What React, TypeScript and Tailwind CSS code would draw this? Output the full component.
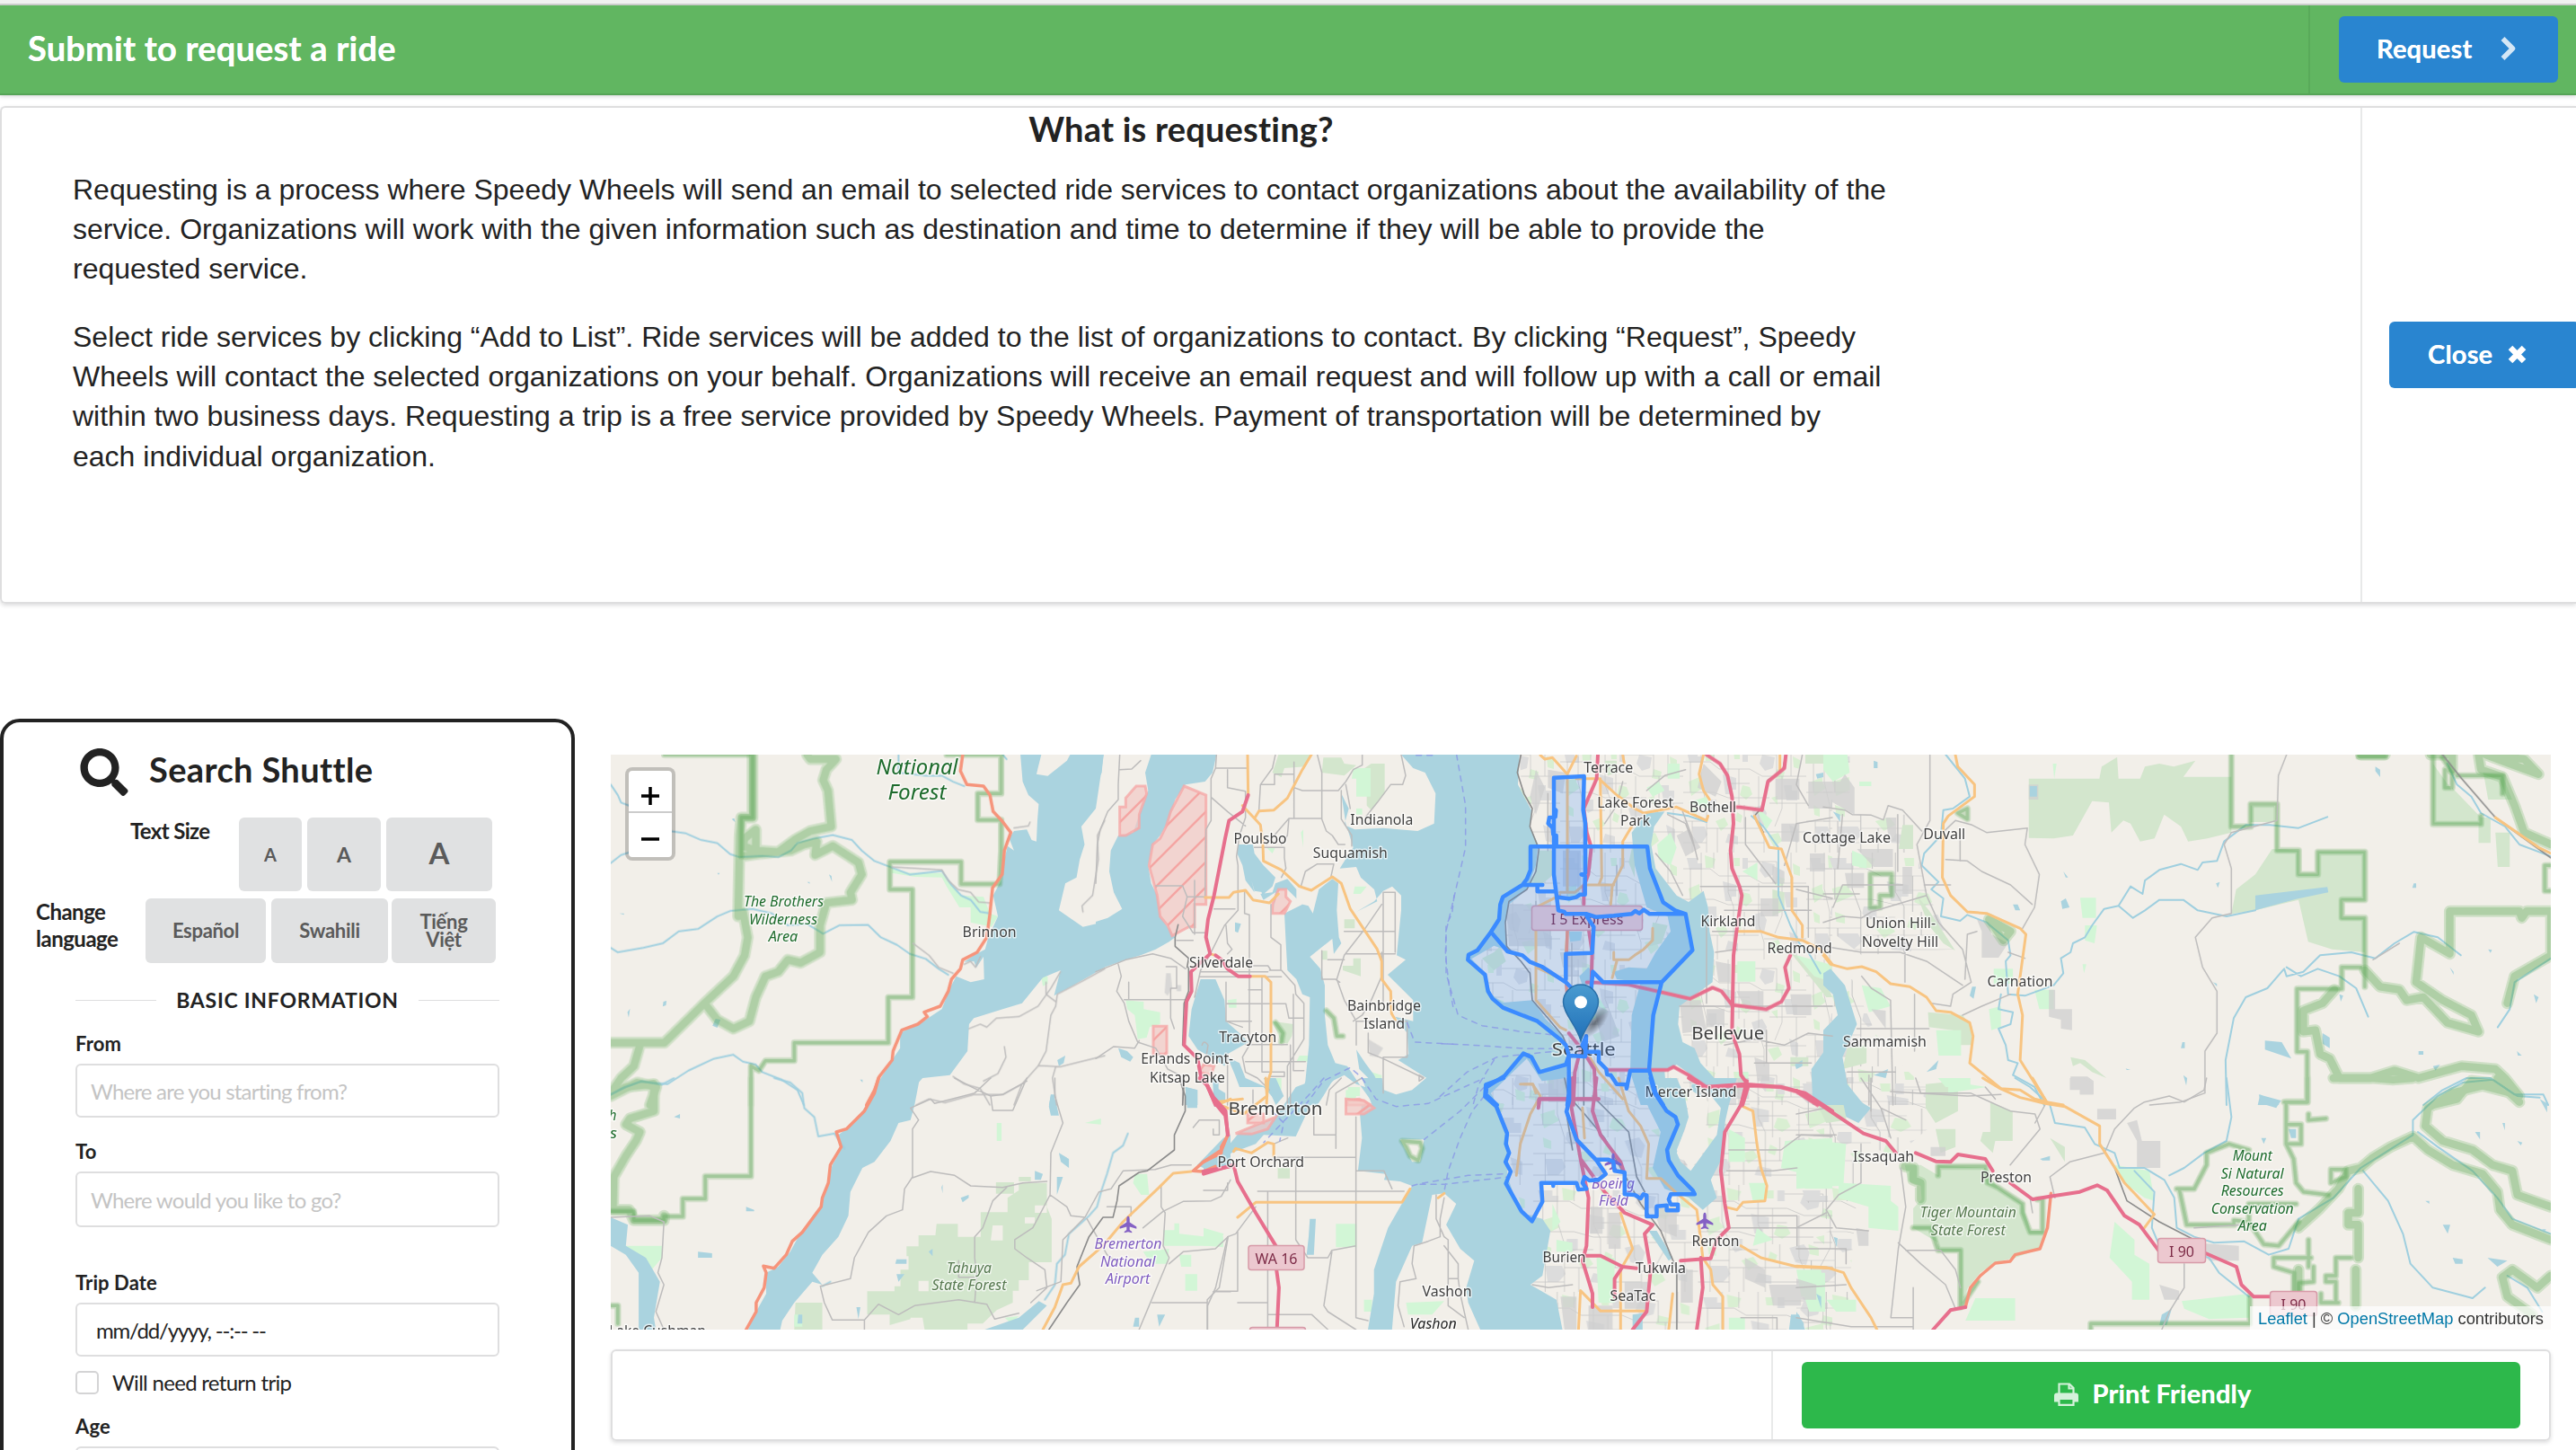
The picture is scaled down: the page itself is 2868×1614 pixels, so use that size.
import React from "react";
import { FaSearch } from "react-icons/fa";

type Kind =
  | "urban" | "water" | "land" | "forest" | "meadow" | "builtup" | "river" | "military"
  | "minor" | "rail" | "primary" | "trunk" | "motorway" | "border" | "ridge" | "ferry"
  | "zoneFill" | "zone";

type Sheet = { transform: string; layers: Partial<Record<Kind, string>> };

// Each map sheet carries its own local grid, placed on the shared canvas by its transform.
const sheets: Sheet[] = [
  {
    transform: "translate(670 830) scale(0.35714 0.33333)",
    layers: {
      water:
        "M1305,30L1312,120 1330,165 1362,195 1358,250 1355,320 1340,315 1325,280 1285,285 1270,310 1285,350 1265,335 1255,380 1245,450 1220,500 1235,570 1220,605 1205,640 1195,680 1160,700 1130,722 1160,720 1168,740 1190,705 1192,780 1150,790 1105,770 1085,810 1060,880 1010,915 930,960 930,1010 905,1050 870,1110 830,1200H965L975,1140 1000,1110 1085,1100 1140,1020 1145,930 1160,910 1250,880 1310,860 1375,775 1430,750 1410,835 1470,800 1568,740V588L1500,605 1425,550 1445,460 1480,440 1490,380 1505,330 1495,270 1540,210 1565,30Z M345,935L355,912 370,915 360,942Z M192,855l10,-3 -2,15 -10,4Z M80,890l8,-12 -4,30Z M1420,1050L1445,1035 1440,1060 1425,1070Z M1400,1165h14l-8,35h-12Z M405,245l8,-3 3,14Z M708,430l8,5 2,20Z M360,425h8l-4,6Z M640,455h8v6Z M55,560h14v5Z M805,1115h8v10Z",
      land: "M1370,30L1355,95 1390,101 1450,50 1460,30Z",
      meadow:
        "M905,410L960,425 1060,425 1085,455 1120,500 1190,505 1210,560 1235,570 1215,605 1150,590V540H1115L1075,470 1060,440 975,438 905,425Z M1370,770h20v25l-15,8Z",
      river:
        "M28,130L50,165 60,190 85,200 M28,392L60,365 90,355 150,320 210,285 260,292 310,315 360,325 400,362 430,372 500,368 550,372 590,350 610,325 660,310 720,298 780,315 810,350 850,385 900,405 960,430 1060,418 1090,465 1120,500 1150,515 1180,555 1210,560 M28,675L50,690 130,675 190,660 240,620 300,612 360,570 400,552 470,545 530,560 580,600 640,595 690,628 740,600 830,598 870,640 920,665 960,695 1010,712 1050,745 1080,765 M28,1165L70,1140 120,1122 205,1130 270,1085 350,1045 410,1032 440,1055 480,1065 500,1090 560,1115 610,1150 630,1200 M925,30L925,90 1010,100 1060,100 1095,120 1130,135 M1250,30L1262,45",
      minor:
        "M905,405L1060,415 1080,450 1110,480 1150,490 1175,522 1210,525 M970,660L1020,700 1050,740 1095,760 M1285,275L1330,268 1335,255 M1130,730L1150,720 1165,740 1180,705 M1568,250L1545,300 1548,380 1530,500 1497,535 1500,555 M1145,945L1180,930 1200,940 1230,910 1300,905 1360,870 1400,810 1430,755 M1568,745L1500,785 1420,830 1415,870 1400,900 1385,1020 1360,1070 1310,1130 1250,1165 1160,1165 1070,1192 1020,1180 980,1200 M1360,1068L1430,1072 1568,1035 M1415,1072L1405,1110 1418,1200 M1255,1005L1260,1040 1235,1095 1190,1120 M1095,1105L1130,1130 1180,1145 1210,1200 M1385,790L1385,830 1415,855 M1310,1130L1285,1200",
      border:
        "M195,30H470V240H435V370 M1075,30H1245V160H1172V248H1245V350L1240,462H1120V388H898V480H968V840H893V992H600V1052H510L490,1085 465,1070V1200",
      ridge:
        "M470,30V240H435L430,300 425,570 M640,30L650,45 730,45 700,80 690,115 705,150 715,270 650,285 600,315 550,355 480,350 440,335 445,310 480,280 480,350 M430,370L500,360 590,350 630,330 670,320 665,365 720,335 800,390 810,430 775,490 780,515 700,525 680,600 680,690 620,725 580,715 550,755 510,770 480,840 460,920 410,945 360,915 320,860 M425,570L440,555 455,640 445,700 410,770 320,860 195,992H28 M120,995L100,1070 60,1110 28,1160 M28,1170L110,1125 170,1140 150,1200",
      trunk:
        "M1125,30L1118,85 1138,130 1190,135 1210,165 1220,220 1245,248 1275,290 1255,350 1248,430 1218,475 1210,560 1200,640 1170,690 1125,715 1118,745 1090,780 1080,820 1055,870 1005,890 1015,905 985,930 935,950 908,1020 905,1050 865,1105 850,1150 825,1200",
    },
  },
  {
    transform: "translate(1220 830) scale(0.33333)",
    layers: {
      water:
        "M0,30H25L20,90 0,130Z M185,30H403L390,90 365,120 300,130 265,180 245,250 215,300 190,330 175,400 185,460 205,500 215,570 250,620 265,640 245,655 200,680 150,700 100,715 0,750V588L40,575 88,545 60,490 45,420 50,350 75,300 125,290 145,230 175,150 165,90Z M475,330L525,330 530,360 560,400 600,440 590,470 555,500 550,450 560,490 530,485 520,450 530,490 500,450 490,400 472,360Z M600,460L640,445 670,480 670,525 710,535 725,560 745,480 790,445 810,460 805,550 812,640 820,660 795,695 790,645 715,705 750,745 765,800 765,900 775,1000 800,1060 840,1070 870,1015 880,1080 910,1110 900,1140 870,1130 830,1100 790,1120 760,1170 740,1200H680L700,1120 712,1000 715,840 690,830 670,780 640,750 635,660 630,560 590,560 600,490 560,515 550,495 590,490Z M1050,30L1020,30 1060,75 1100,90 1135,160 1130,260 1075,285 960,275 865,280 830,265 845,210 820,160 835,260 860,340 840,370 815,410 870,405 885,440 930,480 940,520 870,555 930,520 960,485 990,470 1020,500 1020,550 1005,700 1035,715 975,765 1060,850 1060,920 1000,905 1040,960 1045,1030 1010,1050 1105,1110 1040,1160 960,1165 930,1100 900,1060 870,1015 840,1070 880,1130 930,1200H1200V30Z M350,780H400L430,850 435,920 480,960 510,990 440,1030 430,1070 400,1050 340,1015 310,970 320,880Z M440,1040L480,1060 500,1110 590,1150 610,1195 560,1140 480,1140 465,1100Z M75,1010l30,10 20,20 -10,15 -30,-15Z M300,1140l40,10v50h-40Z M465,590l20,5 -10,30 -10,-5Z M390,1110l20,5v90h-15Z",
      land: "M590,560L630,560 690,530 640,480 610,480Z",
      forest:
        "M610,30H720L700,70 630,75 620,105 590,90Z M760,40H820L830,60 870,65 830,100 755,90Z M920,60H965V160L920,215 905,200V150H890V80Z M830,580h35v30h-35Z M755,685h18v30h-18Z M860,710h25v60l-60,-20v-15h35Z M590,920L660,930 655,970 640,995 620,990Z",
      meadow:
        "M860,75H918V170H870V110H855Z M870,210h20v20h-20Z M865,470h40l-20,25h-25Z M100,850L160,855 160,880 215,890 215,930 180,940 170,975 140,980 130,900 105,880Z M680,1035h30v20h-40Z M920,1090l35,10v50Z M570,340h30l-10,20Z M685,290l8,-10v60Z M440,850l30,-5v30h-25Z M835,1150h40l-10,40h-30Z M590,1110h30v40h-25Z",
      builtup: "M235,760h15l5,50 -15,25 -10,-10Z M910,980L960,1010 940,1040 915,1035Z M270,800h15v20h-15Z",
      military:
        "M135,135H165L170,160 145,230 145,275 100,300H80V205H100V175Z M295,135L368,165V530H330V605H310L255,635 240,600 215,570 205,500 178,400 190,330 215,310 235,270 250,220Z M610,480H635V505L650,520 630,560H590V530Z M192,937H237V1030H192Z M360,1065l35,5 -10,30 -40,-10Z M840,1185l40,-5 40,20H840Z",
      minor:
        "M403,30L400,75 385,110 385,250 368,280 365,500 M400,75H505 M440,80V140L500,152 M385,172L440,220 500,268 M600,30L590,75 550,130 545,215 M550,130H597V95H662 M662,55V240 M662,140L690,150H810L835,120 860,80 890,65V30 M740,30L755,90V245L770,285 790,300 810,330H832 M820,150V245L855,300V335 M645,243H755 M645,243L640,300 620,330 M645,243L570,330 M530,340H630V375L635,410 620,440 M795,395H740L700,420 685,470 M795,395L785,440 M80,30L75,130 75,180 40,220 15,280 5,330 0,460 M80,80L120,78 150,50 M1020,30L1035,100 1025,130H985L940,190 900,240 M835,130L850,210 M500,152V240L480,300 470,370 475,400V550L430,600 380,700 350,750 330,840 M395,545H465 M497,485V560L513,565V900 M435,600L440,660 455,680 440,695 M585,530L585,640 618,665V750 M580,750H620L665,800 668,830 695,860V980 L640,1070V1200 M960,490V690 M960,490H1000V690 M955,530L900,610 830,700 805,780 830,850 870,920 870,1000 M830,620H1000 M835,695H1000 M755,685V780H800L815,790 M775,715H830 M955,690V770L920,850 890,900 860,920 M870,920H1040V1040H960V1160 M910,960V1025L960,1045 1095,1110 1080,1120 1080,1100 1095,1108 M960,640V860 M200,468H290L305,505H365 M305,505L290,570 325,625H365 M330,450V630 M0,755L100,715 190,695 250,710 300,745 M75,730L85,770 70,820 95,860 110,920 140,990 200,1010 240,1080 280,1100 M95,848H300 M110,790V845 M235,738H270V810H250V910L262,945 M0,1045L60,1005 130,1010 145,985 M270,650H325 M350,755H575 M345,772H620 M435,790V920L490,940 M435,862H635L645,910H695 M435,920H520 M513,900V1000L490,1040 500,1090 540,1110 580,1150 M555,770V1090 M510,815H555 M500,998H640 M500,1055H700 M555,1090H630V1105H580 M660,830V1085H695 M355,1000Q360,980 375,1000L370,1030 M525,735H575L585,750 M650,1000V1200 M440,1030V1200 M525,1150V1200 M290,1100V1200 M820,1110L780,1150 770,1200",
      rail: "M275,598L265,640V670L310,710 305,740 M310,740V820L295,860 290,1000 M295,1120L290,1200",
      primary:
        "M507,30L509,165 M720,30L690,80 640,175 595,215 545,218 530,243 M490,200L530,243 550,265 558,330 560,385 620,415 680,470 720,483 790,438 820,460 850,545 940,680 955,720 955,780 985,820 988,895 1000,915 M365,507H445L460,490 500,483 525,515 580,525 610,495 M380,695L400,700 M510,770H565L585,790V1090L575,1120 570,1200 M400,1190L490,1180",
      motorway:
        "M509,165L490,220 445,250 432,310 395,500 375,580 368,640 382,695 M400,700L420,715 440,745 475,770H515 M382,695L350,725 318,755 320,820 303,855 295,1000 340,1045 350,1100 370,1130 400,1200",
      border: "M770,885L795,910 805,970H825 M600,925L625,960 620,990",
      ferry:
        "M1070,32H1130 M1197,500L1190,560 1170,600 1168,700 1180,800 1195,880 M1040,925L1065,990 1200,997 M700,1200L760,1120 850,1075 890,1110",
    },
  },
  {
    transform: "translate(1600 830) scale(0.33333)",
    layers: {
      urban: "M275,30H1320V1200H130V700L225,560 300,430Z",
      water:
        "M0,30H275L270,130 290,170 315,215 310,270 338,330 330,400 300,480 240,530 225,600 238,685 190,668 115,712 160,760 180,830 220,858 320,850 360,910 420,970 440,1040 430,1110 350,1120 300,1045 180,1160 200,1200H0Z M650,290L700,225 760,220 725,270 715,330 730,410 800,500 840,522 890,485 905,540 910,620 925,690 920,790 850,840 810,870 805,930 820,990 860,1010 880,1060 935,1120 900,1135 850,1100 800,1065 760,1090 770,1200H680L645,1090 650,900 680,790 600,780 590,755 640,740 700,745 730,690 780,620 770,570 700,540 660,400Z M440,620h45l-5,30 -35,5Z M475,770l30,-30 15,15 0,40 -35,5Z M1310,930H1320V1200H1255L1250,1080 1300,1010Z M1265,95l25,-5v15l-20,5Z M1195,1065l25,-15v20l-20,10Z M850,1130h20l20,70h-40Z",
      forest:
        "M250,120l40,30 20,80 -25,-10Z M340,350h50v80l-50,40 -20,-20Z M560,50h40v40l-30,10Z M190,690l20,-20 20,50 -40,30 -40,-40Z M660,300l-20,90 20,50Z M720,590l50,10 -20,60 -40,10Z M1230,30h90v30h-90Z M1120,480l40,10v60l-40,20Z M1180,690l60,30 60,70 20,50h-20Z M1180,1040h60v30h-60Z",
      meadow:
        "M735,330L780,290 800,340 780,400 740,380Z M1003,720h60v68h-60Z M840,190l60,-20 10,40Z M480,860l60,-20 30,50 -60,30Z M1000,1090h40v50h-30Z M700,140l40,-20 20,30 -40,20Z M770,60h40v50h-40Z M1200,700l110,30 10,60 -60,-20Z M1060,200l60,50 -20,30Z M1020,420l50,-30v60Z",
      builtup:
        "M370,80l60,10 -10,70 -50,-20Z M330,80l30,60 -30,90 -20,-60Z M890,60l60,60 -20,50 -60,-30Z M1130,110h80v70h-80Z M1240,120h80v90h-80Z M1245,360h50v60h-50Z M1150,260h60v60h-60Z M800,300l40,-20 40,60 -50,30Z M1080,510h60v60h-60Z M810,850h70l20,100 -80,10Z M900,880h60v60h-60Z M1000,820h90v60h-60Z M1120,400l40,20v40h-40Z M930,720l50,10v60h-40Z M230,530h150v140h-140Z M520,860l60,30 30,80 -60,20Z M1180,830h70v70h-60Z M1060,1040l50,20v60h-40Z M410,690h90v50h-80Z M420,350h60v120h-60Z M830,770l30,0 10,60 -30,-20Z M870,760l20,10v50l-20,-20Z",
      river: "M770,225L840,235 900,255 M1050,235L1090,270 1140,340 1140,500 1180,600 1210,660 1240,690 1280,760",
      minor:
        "M700,150L760,100 830,80 M620,120L600,200 560,260 M1320,240L1200,260 1160,400 M960,1000L1060,980 1160,1000 1240,960 1320,970 M820,220L850,300 870,380 M1220,30L1200,130 1240,200 M730,360L780,420 820,500 M880,470H1240V640 M920,620H1060 M810,870H1320 M960,550H1250 M1060,1060H1250 M900,600V860 M1030,240V330L1130,460 M1200,480L1320,510 M1100,950V1060 M770,230L830,260 860,340 M930,690L1000,680 M330,520V850 M450,660V800 M600,400V500 M370,160V350",
      rail:
        "M280,30L268,90 290,160 318,210 310,270 340,345 330,420 300,480 240,520 228,590 232,670 280,720 310,760 318,850 370,910 420,970 450,1040 M1165,30L1155,80 1105,115 1090,200 1060,235 1090,290 M490,1040V1200",
      primary:
        "M345,32L360,45 385,40 435,95 465,35 M435,95V490 M465,110H540L600,165 660,210 690,225 800,205 900,250 905,235 M545,110L550,440 540,465 M620,30L625,60 M650,270L620,320 620,400 585,470 580,530 M410,490H460L490,465H590 M890,30L875,95 890,150 910,180 M1060,235L1110,340 1150,345 1185,440V550L1220,600V640 M1000,620H1080L1140,640 1220,650 1280,680 1320,730 M720,610L720,650 690,680 660,700 640,715H590V690 M600,720L585,775 M410,500L330,540V850L410,940 430,950 M330,740L430,785 M510,1040L540,1090 620,1180 M435,620L430,690 M290,1130H320L330,1160 M1145,30V80",
      trunk: "M435,620L430,780 440,900",
      motorway:
        "M537,30L533,110 490,210 500,290 515,340 505,430 490,470V530 M500,570L518,690 515,800 M500,790H520L640,798 845,845 920,808 950,820 985,865 1100,880 1150,855 1175,810 1162,740 1180,700 M900,30L945,60 970,100 985,170 990,260 980,350 985,410 1010,470 1018,500 1000,620 990,700 985,960 1010,1030 1015,1100 1040,1135 1020,1200 M985,205H1010L1085,215 1105,120 1160,75 1165,30 M565,1083H770L790,1072 840,1100 900,1140 1040,1135 1150,1140 1200,1155 1270,1200 M440,960L480,1010 460,1090 455,1200 M500,1040L525,1080 530,1180 M340,1195V1180H540",
      ferry:
        "M65,30L95,200 95,340 65,470 30,620 30,760 70,900 150,935 280,955 380,965 M15,995L120,1000 300,1012H400 M380,1022L200,1040 100,1090 0,1180 M190,1050L140,1130 120,1200",
      zoneFill:
        "M312,337H702L711,410 755,523 795,550 830,562 853,683 750,790 722,900 708,1082 715,1110H438L440,1035 430,1000 410,980 335,917 220,872 185,840 170,815 160,765 103,720 105,698 135,683 180,622 207,580 211,530 220,505 285,465 300,445 312,415Z M438,1110H218L225,1103 288,1028 315,1040 342,1090 430,1065 440,1035Z M390,107L491,102 488,215 495,260V337H392L398,298 386,275 371,260 375,240 395,237Z",
      zone:
        "M390,337V210L397,216 395,238 375,240 371,260 386,275 388,297 398,300V337 M390,210V107L491,102 488,215 495,260V425L482,430 494,435V497H478L465,506 440,511 405,506 M285,465H352 M335,465V487H395 M312,337H702L711,410 755,523 795,550 830,562 853,683 750,790H555L520,755 515,810 M750,790L722,900 708,1082 730,1160 755,1200 M312,337V415L300,445 285,465 220,505 211,530 207,580 180,622 135,683 105,698 103,715 160,765 170,820 185,845 220,875 335,920 410,980 430,1000 440,1035 430,1065 342,1090 315,1040 288,1028 225,1103 165,1140 163,1165 200,1200 M180,622L235,687 285,700 310,722 350,738 430,790 450,810 M390,337V430L405,550 425,555 430,562H500L530,572 590,568 650,562 662,552 675,560 690,548 710,562H830 M500,570L523,605 518,692 430,695V780 M440,1035L495,1038 498,970 485,1000 500,1022H540V1055L565,1080 568,1098 580,1100 600,1130 632,1132 633,1145 645,1085H708 M440,1035V1160L435,1200",
    },
  },
  {
    transform: "translate(1600 830) scale(0.33333)",
    layers: { zoneFill: "M390,337H495V497H478L440,511 405,506 390,430Z" },
  },
  {
    transform: "translate(2030 830) scale(0.53444 0.33333)",
    layers: {
      urban: "M0,30H55V230H170L215,480 270,680 80,700 0,600Z M0,780H60L120,1000 250,1200H0Z",
      water:
        "M0,760L15,745 45,800 70,930 40,1040 50,1130 85,1200H0V950L30,900 20,830 0,800Z M900,500L1050,472 1052,490 985,512 900,550Z M920,985L955,990 975,1045 920,1015Z M910,1165L950,1200H905Z M1040,960l15,15v35l-15,-15Z M1150,70l10,10v25l-10,-20Z M430,135h15v35h-15Z M495,520l10,-10 8,30 -15,5Z M500,420l10,20h-5Z M818,460l8,-5 -4,20Z M310,805l8,0 -5,40 -8,-10Z M105,50l8,5v20h-8Z M20,220l15,10v25Z M748,990h5v20h-8Z M750,1100l8,10 -2,25Z M812,790l8,5v10Z M1270,1070l15,-5 -10,20Z M1480,830l10,10 -5,20Z M1230,460h5v15h-8Z M1385,680l8,2 -3,10Z M395,530l10,0 5,20 -10,0Z M105,1100l30,-20 -5,30Z M215,1090l25,-40 -5,30Z M1305,740l8,15v10Z M1445,1020l10,15h-8Z M1075,830l8,5 -5,20Z M1240,1020h10v12h-10Z M630,1078l10,5h-8Z M780,705l5,25Z",
      forest:
        "M428,110H575L580,70 612,38 615,110H660L670,70 700,60 730,70 775,50 750,104H850V290L800,310 760,320 745,270 710,230 690,310 660,320 640,260 625,250 600,290 595,190 560,185 520,300 480,310 428,308Z M935,345L990,350V430H1030V355H1128V515H1080V575H1128V690L1060,680 1010,655 990,515 900,550 850,562 860,480 900,430Z M1270,60L1310,150V140L1370,240V262H1270Z M165,265h22v80h-30Z M890,200h50v55h-50Z M195,500L220,550 275,685 250,660 220,600Z M218,890L290,900 310,940V1000L280,1000 270,950 220,940Z M515,1040L545,1050 590,1110 560,1090 535,1060 520,1070Z M1365,240h25v85h-25Z M1400,290h30v115h-25Z M1375,90l40,10 20,80 -50,0Z M50,1010l40,-10v60l-50,20Z",
      meadow:
        "M0,30H50L55,90 20,120 0,80Z M535,508H568V575H540Z M545,600h25l-5,60 -20,-10Z M235,950H287V1035H240Z M440,815H480V880H450Z M355,745h40v50h-40Z M345,880l25,-10v70l-20,10Z M478,60h8l-5,50Z M60,350l30,20v40l-30,-10Z M75,120h25v15h-25Z M540,730l8,0 -5,30Z M80,800l40,10 20,60 -45,20Z M260,1120l80,20 -80,20Z",
      builtup:
        "M0,120H35L45,95 65,140V230L20,190 0,190Z M45,425l40,0v50h-35Z M70,345h75v60h-40Z M165,405h20v90h-20Z M470,815H483V880H518V950L495,945V915L470,905Z M515,1105H550L563,1120V1165H535V1140H515Z M320,580L345,590 350,630 385,660 365,708H330V620Z M130,240h22v80h-15Z M428,130h20v50h-20Z M100,880l30,5v60Z",
      river:
        "M255,30L295,110 305,170 270,210 250,215 245,300 210,360 205,400 240,455 225,480 250,510 245,570 285,585 300,565 340,590 385,650 390,700 380,720 385,830 420,835 480,800 500,760 495,710 515,690 520,660 545,640 560,600 585,545 615,535 640,470 665,495 670,450 700,415 745,395 780,415 790,390 820,385 835,320 880,265 930,265 990,275 1050,238 M615,535L645,575 670,550 700,515 750,515 780,550 840,570 900,550 M370,830L365,880 395,890 390,930 365,945 380,1000 385,1050 405,1060 395,1100 440,1140 460,1200 M840,1200L838,1050 855,910 880,840 925,810 960,745 965,770 1000,755 1035,700 1100,690 1150,710 1190,660 1230,622 1280,640 1328,700 M965,740L995,770 1030,745 1075,770 1110,810 1135,905 M1405,940L1430,880 1440,790 1516,710 M1300,60L1320,130 1350,170 1370,225 1420,270 1450,330 1516,370 M1250,1200L1290,1150 1340,1110 1390,1110 1440,1165 1500,1165 1510,1200",
      minor:
        "M0,205L45,215 60,230 100,232 125,248 135,200 165,215 205,285 M222,30V250L195,330 215,500 240,590 290,680 308,790 270,830 265,870 225,860 M252,285L275,250 310,265 340,290 370,285 425,275 420,330 450,430 440,540 415,610 M255,380L300,385 330,420 390,465 435,530 M285,290V385 M965,30L948,100 945,250 850,290 835,330 850,410 850,560 810,575 775,640 790,740 820,820 820,960 795,1020 795,1160 745,1190 680,1200 M0,670L80,690 160,690 215,720 290,800 M210,465H265 M165,465H40L20,540 M0,590L40,570 80,575 100,555 215,500 M170,690V790 M155,230V420 M80,770L100,810 140,850 145,1200 M70,945H220 M95,1100V1200 M190,830V1020 M50,1090H150 M290,900L330,870 390,830 M320,620L300,630 295,780 M140,1155L300,1170 370,1165 M385,690L420,710 M0,495H75 M30,410L40,230 M1145,715L1200,660",
      rail: "M1290,30L1330,110 1400,240 1516,375",
      primary:
        "M275,30L280,70 315,130 315,170 260,235 250,260 248,440 265,500 300,555 340,560 410,610 422,630 405,830 415,900 410,1050 465,1190 500,1200 M0,700L15,730 50,745 80,738 110,755 140,795 180,805 215,840 235,885 265,890 305,925 312,970 305,1060 370,1145 410,1150 440,1180 470,1192 M1400,240L1490,340 1516,360",
      border:
        "M850,30V270H890V195H945V350H990V430H1030V355H1128V515H1080V575H1128V805 M1120,740H1080V812H987V1022H1008V1190H960 M1115,36H1170 M1270,30V262H1370V235 M1290,40L1310,90V140H1295V80 M1320,100H1415V160 M1516,400H1503V485H1516 M98,428H142V500H118V540H98V430 M300,210V245L280,225Z",
      ridge:
        "M1128,750L1160,805 1200,815 1215,850 1250,840 1300,925 1365,955 1350,900 1290,850 1235,790 1245,640 1305,695V553H1450L1455,575 1465,553H1516V700L1440,770 1425,860 M1065,815L1040,860 1000,885V955L1025,950 1035,1030 1055,1045 1075,1110 1140,1110 1190,1085 1240,1110 1330,1070 1400,1080 1420,1110 1450,1170 M1270,1200L1320,1180 1350,1120 1410,1130 1450,1190 M1365,30L1370,80 1415,105 1440,200 1460,290 1516,330 M1380,30L1430,60 1490,95 1460,45 1400,35 M1265,30H1310V80 M1120,30H1170 M345,580L390,620 375,650Z",
    },
  },
  {
    transform: "translate(670 1200) scale(0.44643 0.33333)",
    layers: {
      water:
        "M705,0H793L780,90 770,140 740,150 720,210 680,280 650,300 620,380 615,460 590,530 550,590 525,650 550,690 525,680 480,750 450,810 445,840H365L385,780 410,720 410,650 440,630 470,580 490,530 545,440 560,360 575,290 600,230 590,190 630,150 690,30Z M22,465L65,490 60,560 110,600 145,680 130,800 135,840H92V650L60,590 22,560Z M955,840L1040,800 1090,745 1110,760 1050,840Z M1120,55l12,20 8,50 -20,0 -5,-30Z M1455,30l30,10v60h-25Z M1140,250l25,20v30l-20,-20Z M1080,310l20,10 -5,20h-15Z M1135,330l15,0 -15,60Z M1485,290L1550,200 1568,190V300L1500,300Z M180,130l15,-10v15Z M240,580l35,5v15h-35Z M360,430l20,10v5h-20Z M735,605l25,0v15h-28Z M815,580l10,-10v25Z M735,655l20,0 -15,25Z M895,400l20,-10v10l-15,15Z M1385,790l20,0 -15,40Z M1330,800l10,0v30h-15Z M635,765l10,0 -5,40Z M850,355v30l-3,-20Z M490,790l10,0v30h-12Z M1530,30l25,20v30l-20,-5Z",
      forest:
        "M835,487H888V530H945V448H1012V400L1040,375V350H1110V430L1122,470V615H1065V675H1040V710H1025V750L985,775 950,820H912V840H805L800,800H770V805L718,825V790H662V712H730V695H745V640H765V595H760V562H790V525H832Z M983,348h45v38h-45Z M1040,330h30v15h-30Z M483,750H550V840H480Z",
      land: "M975,492h25v50h-30Z M1055,465h25v20h-25Z M790,677h25v35h-25Z M1080,425h30v25h-30Z",
      meadow:
        "M58,560H150V600L125,640 110,610 70,580Z M1400,508H1428V485H1440V520L1510,530V505L1550,530 1550,565 1510,560H1400Z M1350,580L1415,570 1410,620 1370,620Z M1330,320L1360,320 1365,390H1345L1325,350Z M1455,655h30v55h-30Z M985,150l12,0v60h-12Z M1005,800l35,-5 -20,25Z M1205,150l40,-15v20Z M480,790l20,0v40h-20Z M1440,590h30v40h-25Z",
      river:
        "M22,55L60,30 100,10 150,22 180,0 M430,0L470,15 500,50 505,100 530,130 540,195 580,185 605,235 M1312,185L1300,225 1275,250 1260,320 1245,380 1235,430 1215,460 1165,520 1155,590 1135,620 1130,690 1105,740 M550,695L570,680",
      minor:
        "M880,0L930,35 970,60 1000,55 1060,10 M970,0L930,50 830,85 820,70 770,100 790,140 775,170V330L755,370 750,440 710,460 665,515 630,600 620,670 545,695 555,750 575,808H655L690,755 740,790 780,760 890,740 960,755 980,805 1040,785 M775,333L820,312 880,325 920,360 1000,365 1050,350 1110,345 M970,60L975,108H1025L1060,0 M1130,0V60L1150,150 1120,250 1118,390 1160,430 1170,460 1205,465 1240,380 1270,370 1300,310 1380,305 M1010,365L975,410 950,500 930,530V600L935,660 930,750 M890,610V665H935 M1118,390L1075,500 1030,540 1030,570 1060,600 1105,640 1110,700 1070,750 M22,465L120,460 155,480 150,600 140,650 155,690 135,780 155,840 M655,808V840 M1205,465L1150,540 1145,680 1085,710 M1395,360V430L1405,450 1400,560 1415,600 1340,840 M1350,500L1400,445 1450,412 1520,410 1545,395 1568,340 M1372,750H1508 M1562,530L1540,700 1510,740V840 M1415,620L1450,580 1530,570 1562,530 M1260,430h60v30 M1475,165L1490,140H1540V190L1525,190 1525,170 M1525,713H1568 M1380,305L1420,290H1470 M1210,470L1260,590 1290,620",
      rail: "M1440,0L1455,60V110L1428,190 1428,240 1360,310 1340,315 1290,360 1285,410 1275,465H1250L1215,530 1185,630 1192,690 1160,750 1115,840",
      primary: "M1470,312L1425,318 1390,365 1300,480 1250,560 1190,630 1170,685 1150,690 1130,765 1100,840 M1535,90L1568,70",
      trunk: "M690,0L680,50 655,110 610,170 585,180 597,230 570,290 565,350 550,400 547,430 500,515 475,545 460,590 430,635 403,628 410,650 405,700 385,750 385,780 360,840 M1562,190L1545,230 1545,250 1500,280 1475,310 1500,312 1530,295",
      motorway: "M1490,0L1510,25 1530,85 1555,125 1562,190 M1568,295L1500,312",
      border: "M372,0V328H258V403H202V462H155V475H80V445H22 M22,760H40V820",
      ridge: "M22,55L60,30 130,20 130,110 70,135 60,155 95,180 85,210 60,260 30,330 28,440H68L80,475H155V460",
    },
  },
  {
    transform: "translate(1340 1200) scale(0.44643 0.33333)",
    layers: {
      urban: "M730,0H1568V840H890L880,740 815,690 860,520 800,470 730,100Z",
      water:
        "M395,0H750L700,60 735,95 760,185 758,330 790,450 845,470 865,510 845,660 815,690 880,740 895,840H690L660,750 655,700 675,610 640,570 605,490 630,420 600,385 570,390 545,550 520,560 480,680 470,840H410L425,720 425,640 460,500 520,360 490,345 450,340 455,320 385,310 395,200 390,120 395,90 420,90Z M50,245L90,180 180,130 230,30 290,0H330L270,80 230,195 150,190 130,220 70,250 0,315V280Z M1080,0H1180L1200,60 1210,130 1180,250 1190,280 1215,310 1280,190 1290,100 1230,0H1330L1310,90 1300,150V250L1265,340 1280,400 1245,440 1210,400 1150,370 1120,300 1140,180 1110,100Z M1520,0H1568V70L1525,50Z M265,470h15l-5,120h-18l5,-60Z M1110,510l20,0 40,90 -10,10Z M1465,790h20l15,50h-40Z M1070,790l25,-5 0,55h-25Z M150,0h30l20,60 -20,30Z",
      land: "M445,0H555L520,40 480,55 450,40Z M490,205h60l-10,75 -20,0Z M1205,30L1260,80 1245,250 1215,305 1180,240 1210,140Z",
      forest: "M485,205L550,210 545,250 545,285 520,275 500,235Z M1140,110l25,20v60h-25Z M185,300h30v35h-30Z",
      meadow:
        "M330,487H382V565H330Z M0,500l50,20 -10,40 -40,0Z M505,750L600,745 570,790 510,790Z M1450,210L1568,200V370L1500,370 1495,320 1440,300Z M870,420l20,60 -20,30Z M1360,350h40v60h-30Z M1480,650h70v130h-40Z M1380,500l40,40 -50,20Z M360,30h30v30h-30Z M980,600h45v150l-40,0Z M400,740h20v40h-20Z M1310,170l40,30v80h-40Z M1310,800l40,0v40h-40Z M880,540l40,10v30h-40Z",
      builtup:
        "M965,430h30v90h-30Z M1050,680h60v90h-60Z M1190,640h30v110h-30Z M1410,690h80v70h-70Z M890,730h40v110h-30Z M1350,600l50,40v60l-50,-30Z M1010,450h30v120h-30Z M1310,0h50v70h-40Z M1120,430h60v100l-40,-20Z M960,760h60v80h-60Z M860,0h50v80h-50Z",
      military: "M355,70L400,75 425,100 400,120H355Z M80,185L180,130 160,170 120,187Z M110,120h40v30h-40Z",
      minor:
        "M395,0L330,50V235 M275,100V190 M275,190H330 M175,265H380V570 M0,375H60V350 M135,378H500 M230,265V540 L260,600H310 M130,430L80,520 60,530 30,700 10,760V840 M30,712H85V510 M85,750H160 M160,380V835 M160,790H270L310,840 M310,600L320,575 380,560 M380,560V800L410,810 M320,580L300,760 310,780 380,840 M380,130V310H450L470,370 M600,400L590,470 590,530 560,545 525,560 520,620 530,670 490,680 485,760 500,830 M580,390V470L600,530 610,540V760 M600,560L635,620V670H610 M635,670L640,720 660,840 M610,760L650,800 M1305,310H1420L1480,300 M1310,500H1568 M1310,240H1440L1490,190 1568,195 M1330,460H1480V560 M820,690L860,700 920,690 M1340,800H1430V840 M175,265V220L210,200",
      rail: "M900,0L910,60 950,120 1000,200 1040,300 1090,420 1140,510 1180,640 1180,840 M970,60L1060,180 1080,330 1100,380 M905,120L920,240",
      primary:
        "M75,245L80,235 120,250 160,215 175,220V260 M85,465L130,415H495L515,370 M585,400L600,385 M155,0L158,60 100,120 40,90 M780,325L790,220 815,120 840,60 820,20 790,20 M1035,0L1060,110 1090,160 1110,220 1105,335H1140L1180,385 1230,440 1240,540 1245,600 1265,640 1270,690 1295,730V840 M1345,95L1370,110 1380,220 1390,300 1405,360 1400,410 1345,415 1330,440 1300,430 M1340,560L1390,600 1480,630 1568,635 M1040,450L1070,570 1040,640V840 M940,710L990,778H1100 M940,710L935,840 M1170,720L1160,840 M945,100L950,200",
      trunk: "M60,190L45,240 0,280",
      motorway:
        "M0,0L25,65 55,110 60,190 M0,320L75,290 85,345 130,450 180,560 M182,642L188,700 183,840 M920,0L915,80 940,270 960,400 955,560 945,610 970,720V765 M980,0L970,110 990,190 1040,280 1050,320 M835,100L838,70H905 M930,70H985 M940,270L1000,380 1050,450 1120,490 1100,520 1115,640 1105,780 1070,840 M950,593H990L1045,630 1080,635 M1045,630L1025,670V730 M1190,610L1265,602 1280,540 M1355,10L1340,90 1300,180 1290,310 1300,420 1310,500 1280,540 M1240,600L1245,700 1230,840 M1210,0L1250,30 1350,20 1440,30 1500,50 1568,110",
      border: "M495,210L540,215 545,235 535,275 515,260 505,230Z",
      ferry:
        "M300,0L260,60 210,130 150,215 M170,110L200,150 190,210 M395,0L430,70 480,95 560,85 650,30 700,0 M700,30L640,110 550,205 M700,60L670,110 640,200 610,310 600,380 M520,360L540,352 660,325 750,320 M540,355H600L760,330",
      zoneFill:
        "M748,0H912V75L905,112 930,205 980,272 1003,315 975,342 950,330 955,370 935,372 930,350H842L845,413 819,478 793,445 754,352 766,312 753,280 762,250 754,220 757,185 730,95 702,62 704,22Z M912,0H1115L1125,50 1155,110 1177,130 1183,155 1156,240 1160,275 1183,325 1225,388H1160L1165,425H1130V462H1105V390L1050,388V315L1025,310 1020,280 980,272 930,205 905,112 912,75Z",
      zone:
        "M748,0L704,22 702,62 730,95 757,185 754,220 762,250 753,280 766,312 754,352 793,445 819,478 845,413 842,350H872V360 350H930L935,372 955,370 945,350 950,330 962,342 985,340 1003,320 980,275 930,205 905,112 912,75V0 M980,272H1010L1022,280 1025,310 1050,315V388L1075,390 1090,402 1097,388 1105,392V462H1130V428L1155,425V442H1183V422H1165L1160,405 1165,388H1225L1220,375 1183,325 1160,275 1156,240 1183,155 1177,130 1155,110 1125,50 1115,0",
    },
  },
  {
    transform: "translate(2000 1200) scale(0.55357 0.33333)",
    layers: {
      urban: "M0,0H300V120L200,260 130,220 100,840H0V560L80,500 0,380Z",
      water:
        "M35,0H90L110,60 150,100 125,150 100,130 95,90 35,50Z M930,55L975,75 965,100 935,85Z M1390,600L1430,610 1410,630Z M735,790l20,-20 -10,55h-15Z M990,170l15,0v30h-10Z M1320,600l20,5v15h-15Z M1365,180l10,0v25Z M1495,70l15,15v30Z M1300,490l15,0 -5,30Z M0,780l15,40v20H0Z M75,530l8,5 -2,30Z M490,270l20,-10v15h-15Z M1420,150l5,0v25Z M1450,210l10,5 -3,10Z M40,720l10,10v40Z M935,200l10,0 -5,20Z M1265,410h8v10Z M1500,505l8,0 -5,10Z",
      forest:
        "M218,290H250L285,325V292L380,300 405,365 455,420 470,510H498L490,570 440,600 400,615 370,650 345,700 330,765V580H285V550L235,500V435L252,405 250,360 225,345Z M260,20L325,10V110L280,150 260,100Z M390,80L435,110V210H400L395,250 370,210 375,180H390Z M280,170h40v60l-30,20Z M510,200l30,30v50Z M40,80l60,0v60l-40,10Z",
      meadow:
        "M0,230L50,210 100,220 95,350 190,360V410L205,430V510L145,500V430L85,400V360L0,370Z M640,480L680,540V590L710,620V740H675V680L630,600Z M775,745L910,720V800L830,805 780,770Z M360,735H440V810H340Z M640,290L710,310 720,410 700,400 660,350Z M285,0H350V30L300,30Z M0,640h50v90H10Z M60,740h60v40h-40Z",
      builtup:
        "M550,0H575L597,15V55H570V40H550Z M605,103h38v35h-38Z M665,150l20,-10 10,70H732V300H685V210Z M800,550l90,10v50l-60,0Z M730,690l40,20 0,30h-30Z M0,670l40,20v50H0Z M120,500l25,10v50h-20Z M270,230h30v30h-30Z",
      river:
        "M440,0L470,30 510,90 520,150 580,165 600,220 640,250 650,300 700,300 740,340 760,400 765,500 800,530 840,550 900,545 950,590 990,570 1010,470 1080,400 1135,300 1240,190 M865,0L875,130 865,210 820,250 780,300 750,325 M680,310L720,380 715,500 730,560 830,600 850,650 880,690 910,730 M1240,190V140L1290,60 1340,15 1400,5 1450,60 1495,65 M1140,310L1190,410 1220,520 1235,620 1280,700 1360,735 1385,700 M1250,180L1290,230 1360,310 1410,400 1440,470 1517,520 M1430,660L1470,700 1500,780",
      minor:
        "M0,120L60,100 130,180 M0,190H80 M130,0L170,100 190,200 M170,100L220,140 M240,0L250,50 350,50 430,110 480,120 490,170 430,290 M500,90L480,150 M380,30L400,70 M130,220V350L85,390 60,440 M0,500L60,450 M210,300L220,430 205,570 M205,550L250,620 300,690 320,770 M205,570L190,800H235 M0,570H100V620 M60,440L80,500 145,510 M220,575H290L320,640 330,700 M520,400L510,330 550,280 620,250 M620,250L640,170 680,100 700,80 750,60 780,80 820,40 825,0 M780,620V700L750,780 735,840 M470,400L475,450 M0,700L100,690 M235,700V840 M800,500L900,490 M0,800L110,830H235 M150,0V110",
      rail: "M610,220L640,300 665,410 730,480 800,540",
      primary:
        "M375,0L410,35 450,65 500,85 540,95 610,160 610,220 660,350 720,455 700,500 M475,0L505,85 M0,628L60,632 95,650 110,700 150,800 162,840",
      trunk: "M512,385L505,500 490,570 440,590 430,612 400,618 370,660 350,700 340,765",
      motorway:
        "M0,42L50,90 135,185 180,210 200,250 M240,250L280,278 310,280 325,255 380,270 395,310 M430,350L475,405 510,395 570,380 605,358 625,375 660,460 690,490 728,575 M823,585L885,630 895,690 920,730H952 M275,840L310,775 340,765",
      border:
        "M285,325V295H380L385,350 M235,500H270L285,575H330V765L365,680 M385,350L405,365 455,420V450L470,515H495V405H485 M765,370H800L825,290V250L870,220 910,240 M770,370L785,490H880V475L910,480 940,555 970,560 1010,480 M1028,0V80H985V220L1000,270 1005,350 1020,380 1070,390 M1065,135L1030,140V120 M985,155H1015V220H985 M910,480V420H1005 M1030,540V630 M592,840V820H912V730 M1075,310V350L1105,330V305H1075 M1035,600H960V630L1000,650V710 M1040,630V680L1010,685V710 M1115,600H1085V660H1065V680H1085V745 M1055,720V750H1090",
      ridge:
        "M218,295L235,300V340L250,350V405 M1080,0H1160L1200,5 1240,0 M1410,0L1450,55 1380,25 1320,50 1270,100 1265,160 1300,210 1360,240 1400,290 1440,310 1450,390 1517,430 M1135,300L1160,265 1195,230 1240,195 1270,240 1320,290 1380,320 1410,380 1415,440 1440,490 1517,540 M1010,500L1050,440 1090,370 1110,310 1135,300 M1130,370V450H1110V490H1130V600 M1125,640V760 M1517,660L1490,700 1440,640 1420,665 1430,730 1480,790 M1010,640V710",
    },
  },
];

type Style = React.SVGProps<SVGGElement>;
const line = { fill: "none", strokeLinejoin: "round", strokeLinecap: "round" } as const;
const passes: { kind: Kind; style: Style }[] = [
  { kind: "urban", style: { fill: "url(#streets)" } },
  { kind: "forest", style: { fill: "#d3e6cd" } },
  { kind: "meadow", style: { fill: "#d2f6d6" } },
  { kind: "builtup", style: { fill: "#cfcfcf", opacity: 0.75 } },
  { kind: "water", style: { fill: "#aad3df" } },
  { kind: "land", style: { fill: "#f2efe9" } },
  { kind: "river", style: { ...line, stroke: "#9fcfdf", strokeWidth: 2 } },
  { kind: "military", style: { fill: "url(#hatch)", stroke: "#f5a9a8", strokeWidth: 3, strokeOpacity: 0.8 } },
  { kind: "border", style: { ...line, stroke: "#4f9f49", strokeWidth: 7, opacity: 0.26 } },
  { kind: "border", style: { ...line, stroke: "#4f9f49", strokeWidth: 3.5, opacity: 0.3 } },
  { kind: "ridge", style: { ...line, stroke: "#6fb468", strokeWidth: 13, opacity: 0.26 } },
  { kind: "ridge", style: { ...line, stroke: "#5aa653", strokeWidth: 8.5, opacity: 0.28 } },
  { kind: "minor", style: { ...line, stroke: "#bdbcbc", strokeWidth: 1.5 } },
  { kind: "rail", style: { ...line, stroke: "#8b8b8b", strokeWidth: 1.6 } },
  { kind: "primary", style: { ...line, stroke: "#f8c481", strokeWidth: 3 } },
  { kind: "trunk", style: { ...line, stroke: "#f6947b", strokeWidth: 3.5 } },
  { kind: "motorway", style: { ...line, stroke: "#e76f8d", strokeWidth: 4 } },
  { kind: "ferry", style: { ...line, stroke: "#8a97e6", strokeWidth: 1.5, strokeDasharray: "6 6", strokeOpacity: 0.8 } },
];

// text, centre x, baseline, width, size, colour, italic
type Label = [string, number, number, number, number, string, boolean?];
const INK = "#3f3f3f";
const PINE = "#1d6b2c";
const MOSS = "#56784f";
const AIR = "#7e5bc0";
const labels: Label[] = [
  ["National", 1021, 861.7, 91, 24, PINE, true],
  ["Forest", 1021, 890, 65, 24, PINE, true],
  ["The Brothers", 872.5, 1009, 89, 15.5, PINE, true],
  ["Wilderness", 872, 1029, 76, 15.5, PINE, true],
  ["Area", 872, 1048, 32.5, 15.5, PINE, true],
  ["Brinnon", 1101.6, 1042.7, 60, 16, INK],
  ["Poulsbo", 1403, 939.3, 59, 16, INK],
  ["Suquamish", 1503.3, 955, 83, 16, INK],
  ["Indianola", 1538.3, 918, 70, 16, INK],
  ["Silverdale", 1359.5, 1077.3, 71, 16, INK],
  ["Bainbridge", 1541, 1124.7, 82, 16, INK],
  ["Island", 1541, 1145.3, 46, 16, INK],
  ["Tracyton", 1389.3, 1160, 64, 16, INK],
  ["Erlands Point-", 1321.7, 1184, 103, 16, INK],
  ["Kitsap Lake", 1322, 1204.7, 84, 16, INK],
  ["Terrace", 1790.7, 860, 55, 16, INK],
  ["Lake Forest", 1820.8, 898.7, 85, 16, INK],
  ["Park", 1820.5, 918.7, 33, 16, INK],
  ["Bothell", 1907, 904, 52, 16, INK],
  ["Cottage Lake", 2056, 938.3, 98, 16, INK],
  ["Kirkland", 1924, 1031.3, 61, 16, INK],
  ["Redmond", 2003.6, 1060.7, 72, 16, INK],
  ["Bellevue", 1923.7, 1156.7, 81, 20, INK],
  ["Mercer Island", 1882.5, 1220.7, 102, 16, INK],
  ["Duvall", 2164.7, 934, 47, 16, INK],
  ["Union Hill-", 2116, 1033, 78, 16, INK],
  ["Novelty Hill", 2115.5, 1053.7, 85.5, 16, INK],
  ["Carnation", 2249, 1098, 73, 16, INK],
  ["Sammamish", 2098.4, 1165.3, 93, 16, INK],
  ["h", 682, 1247, 9, 16, PINE, true],
  ["s", 683, 1267, 8, 16, PINE, true],
  ["Bremerton", 1256, 1390, 75, 15.5, AIR, true],
  ["National", 1255.7, 1410, 61.6, 15.5, AIR, true],
  ["Airport", 1255.7, 1429, 49.5, 15.5, AIR, true],
  ["Tahuya", 1079, 1416.7, 50, 15.5, MOSS, true],
  ["State Forest", 1079, 1436.3, 83, 15.5, MOSS, true],
  ["Lake Cushman", 732, 1487, 108, 16, INK],
  ["Bremerton", 1420, 1240.7, 105, 20, INK],
  ["Port Orchard", 1403.8, 1298.7, 96.4, 16, INK],
  ["Vashon", 1611, 1442.7, 55, 16, INK],
  ["Vashon", 1595.8, 1479, 52, 16, "#222", true],
  ["Burien", 1741.6, 1404.7, 48, 16, INK],
  ["Tukwila", 1849, 1417.3, 56, 16, INK],
  ["SeaTac", 1818, 1447.7, 51, 16, INK],
  ["Renton", 1910, 1387, 53, 16, INK],
  ["Boeing", 1796, 1323, 48, 15.5, AIR, true],
  ["Field", 1796.5, 1342, 33, 15.5, AIR, true],
  ["Issaquah", 2097, 1293, 68, 16, INK],
  ["Preston", 2233.4, 1315.7, 57, 16, INK],
  ["Tiger Mountain", 2191.3, 1355, 107, 15.5, MOSS, true],
  ["State Forest", 2191.3, 1375, 83, 15.5, MOSS, true],
  ["Mount", 2507.7, 1292.3, 44, 15.5, PINE, true],
  ["Si Natural", 2507.7, 1312, 70, 15.5, PINE, true],
  ["Resources", 2507.7, 1331, 70, 15.5, PINE, true],
  ["Conservation", 2507.7, 1351, 92, 15.5, PINE, true],
  ["Area", 2507.7, 1370, 32, 15.5, PINE, true],
  ["Seattle", 1763.3, 1175.3, 71, 20, INK],
];

// text, left, top, width
const shields: [string, number, number, number][] = [
  ["I 5 Express", 1705, 1008, 124],
  ["WA 16", 1389.5, 1386, 63],
  ["WA 16", 1391, 1477, 63],
  ["I 90", 2402, 1378, 54],
  ["I 90", 2527, 1437, 53],
];

function Plane({ x, y }: { x: number; y: number }) {
  return (
    <path
      transform={`translate(${x} ${y}) scale(0.85)`}
      fill="#8461c4"
      d="M0,-11C1.6,-11 2,-8.500 2,-6.500V-3L11,3V5.500L2,3V7L5,9.500V11L0,9.800 -5,11V9.500L-2,7V3L-11,5.500V3L-2,-3V-6.500C-2,-8.500 -1.600,-11 0,-11Z"
    />
  );
}

function SheetLayer({ kind, style }: { kind: Kind; style: Style }) {
  return (
    <g {...style}>
      {sheets.map((s, i) =>
        s.layers[kind] ? (
          <path key={i} transform={s.transform} d={s.layers[kind]} vectorEffect="non-scaling-stroke" />
        ) : null,
      )}
    </g>
  );
}

function MapCanvas() {
  return (
    <svg viewBox="680 840 2160 640" width={2160} height={640} className="block bg-[#f2efe9]">
      <defs>
        <pattern id="streets" width="137" height="119" patternUnits="userSpaceOnUse" patternTransform="scale(3)">
          <path
            d="M4,6h12v6h5v7h-14Z M44,32l15,4v13h-5v5h-7Z M28,60h9v12l-6,3 -4,-7Z M88,10l14,3 -2,12 -9,3 -6,-8Z M112,44h9v6h6v11h-12Z M76,70l12,-4 5,9 -3,14 -9,-3Z M10,90h14l3,9 -6,9h-9Z M50,98l11,3v9l-14,-2Z M118,88l10,5v15l-7,-2Z M66,6h6v12h-6Z"
            fill="#dcdcdc"
          />
          <path
            d="M24,3l12,4 -3,10h-8Z M6,40l12,-5v6l4,6 -13,9Z M56,6h7v9h-6Z M66,44l8,2 3,8 -7,6 -7,-5Z M104,26l9,3 -2,9 -9,-2Z M36,84l10,-4 4,8 -8,7Z M94,100l12,-3 4,9 -9,7Z M122,12l8,4v10l-7,-2Z M60,74l6,4 -2,8 -6,-3Z M8,66l7,4v9l-6,-2Z M98,58l7,-2v10Z"
            fill="#d9efd2"
          />
          <path
            d="M0,18H30L40,26H74L88,34H137 M20,0V40L26,66V119 M50,0V44L56,60V119 M0,52H34L50,58H96 M50,42H74 M34,0V18 M62,26V66 M8,18V52 M72,10H104V34 M26,72H50 M84,34V80L90,100V119 M110,34V70L102,90 M96,64H137 M0,84H26 M26,92H84 M90,96H137 M120,0V34 M126,64V119 M68,66V92 M38,92V119 M10,84V119 M0,108H26 M56,108H90"
            fill="none"
            stroke="#c3c3c3"
            strokeWidth="0.65"
          />
        </pattern>
        <pattern id="hatch" width="28" height="28" patternUnits="userSpaceOnUse" patternTransform="scale(3)">
          <rect width="28" height="28" fill="#f3c9c5" fillOpacity="0.7" />
          <path d="M-7,7L7,-7 M0,28L28,0 M21,35L35,21" stroke="#f4a5a3" strokeWidth="2.500" />
        </pattern>
        <linearGradient id="pin" x1="0" y1="0" x2="0" y2="1">
          <stop offset="0" stopColor="#4a9bd0" />
          <stop offset="1" stopColor="#2070b8" />
        </linearGradient>
        <radialGradient id="pinShadow">
          <stop offset="0" stopColor="#000" stopOpacity="0.5" />
          <stop offset="1" stopColor="#000" stopOpacity="0" />
        </radialGradient>
      </defs>
      {passes.map((p, i) => (
        <SheetLayer key={i} kind={p.kind} style={p.style} />
      ))}
      <Plane x={1256} y={1363} />
      <Plane x={1898} y={1359} />
      <Plane x={1796} y={1293} />
      {shields.map(([t, x, y, w], i) => (
        <g key={i}>
          <rect x={x + 0.5} y={y + 0.5} width={w - 1} height={27} rx={3} fill="#ecc8cf" stroke="#d79aa8" strokeWidth={1.5} />
          <text x={x + w / 2} y={y + 20.5} textAnchor="middle" fontSize={16} fill="#7d2b47" fontFamily="Noto Sans, sans-serif">
            {t}
          </text>
        </g>
      ))}
      {labels.map(([t, x, y, w, size, color, italic], i) => (
        <text
          key={i}
          x={x}
          y={y}
          textAnchor="middle"
          textLength={w}
          lengthAdjust="spacingAndGlyphs"
          fontSize={size}
          fill={color}
          stroke="#fff"
          strokeOpacity={0.65}
          strokeWidth={3}
          strokeLinejoin="round"
          paintOrder="stroke"
          fontStyle={italic ? "italic" : "normal"}
          fontFamily="Noto Sans, sans-serif"
        >
          {t}
        </text>
      ))}
      <SheetLayer kind="zoneFill" style={{ fill: "#3388ff", fillOpacity: 0.2 }} />
      <SheetLayer kind="zone" style={{ ...line, stroke: "#3b8bff", strokeWidth: 4.5 }} />
      <ellipse cx={1776} cy={1138} rx={22} ry={9} transform="rotate(-50 1776 1138)" fill="url(#pinShadow)" />
      <path
        d="M1760,1158.500C1755,1141 1740.500,1128 1740.500,1115.500A19.500,19.500 0 0 1 1779.500,1115.500C1779.500,1128 1765,1141 1760,1158.500Z"
        fill="url(#pin)"
        stroke="#2a6fa8"
        strokeWidth={1.5}
      />
      <circle cx={1760} cy={1115.500} r={7} fill="#fff" />
    </svg>
  );
}

function Field({ label, children, className }: { label: string; children: React.ReactNode; className: string }) {
  return (
    <div className={className}>
      <div className="mb-[7px] h-[30px] text-[22px] leading-[30px] font-bold tracking-[0.1px]">{label}</div>
      {children}
    </div>
  );
}

const inputBox =
  "block w-full rounded-[6px] border-2 border-[#dededf] bg-white px-[15px] text-[24px] text-[#222] placeholder:text-[#c4c4c4] outline-none";
const greyButton =
  "flex items-center justify-center rounded-[6px] bg-[#e0e1e2] text-center font-bold text-[#5a5a5a]";

function Sidebar() {
  return (
    <aside className="h-[860px] w-[640px] shrink-0 rounded-[22px] border-4 border-[#222] bg-white pt-[29px] pl-[36px]">
      <div className="flex h-[53px] items-center pl-[49px]">
        <FaSearch className="h-[53px] w-[54px] text-[#222]" />
        <h2 className="ml-[23px] pb-[7px] text-[38px] leading-[44px] font-bold tracking-[0.35px] whitespace-nowrap">Search Shuttle</h2>
      </div>
      <div className="mt-[24px] flex h-[82px]">
        <div className="w-[226px] pl-[105px] text-[24px] leading-[30px] font-bold tracking-[-0.65px] whitespace-nowrap">Text Size</div>
        <button className={`${greyButton} w-[70px] text-[20px]`}>A</button>
        <button className={`${greyButton} ml-[6px] w-[82px] text-[23px]`}>A</button>
        <button className={`${greyButton} ml-[6px] w-[118px] pb-[2px] text-[33px]`}>A</button>
      </div>
      <div className="mt-2 flex h-[72px]">
        <div className="w-[122px] text-[24px] leading-[30px] font-bold tracking-[-0.5px]">Change language</div>
        <button className={`${greyButton} w-[134px] pb-[1px] text-[22px] tracking-[-0.3px]`}>Español</button>
        <button className={`${greyButton} ml-[6px] w-[130px] pb-[1px] text-[22px] tracking-[-0.3px]`}>Swahili</button>
        <button className={`${greyButton} ml-[4px] w-[116px] px-6 text-[22px] leading-[20px] tracking-[-0.3px]`}>Tiếng Việt</button>
      </div>
      <div className="ml-[44px] w-[472px]">
        <div className="mt-[26px] flex h-[30px] items-center justify-between">
          <span className="h-px w-[90px] bg-[#dededf]" />
          <span className="text-[23px] font-bold tracking-[0.75px] whitespace-nowrap">BASIC INFORMATION</span>
          <span className="h-px w-[90px] bg-[#dededf]" />
        </div>
        <Field label="From" className="mt-[19px]">
          <input className={`${inputBox} h-[60px] tracking-[-0.8px]`} placeholder="Where are you starting from?" />
        </Field>
        <Field label="To" className="mt-[23px]">
          <input className={`${inputBox} h-[62px] tracking-[-0.75px]`} placeholder="Where would you like to go?" />
        </Field>
        <Field label="Trip Date" className="mt-[47px]">
          <div className={`${inputBox} h-[60px] pl-[21px] leading-[58px] tracking-[-1.200px]`}>mm/dd/yyyy, --:-- --</div>
        </Field>
        <div className="mt-[16px] flex h-[26px] items-center">
          <span className="size-[26px] rounded-[5px] border-2 border-[#d4d4d5]" />
          <span className="ml-[15px] text-[24px] leading-[26px] tracking-[-0.7px] whitespace-nowrap">Will need return trip</span>
        </div>
        <Field label="Age" className="mt-[21px]">
          <div className={`${inputBox} h-[60px]`} />
        </Field>
      </div>
    </aside>
  );
}

export default function App() {
  return (
    <div className="h-[1614px] w-[2868px] overflow-hidden bg-white font-[Lato,sans-serif] text-[#222]">
      <div className="h-[6px] border-b-2 border-[#cfcfcf] bg-[#f1f1f1]" />
      <header className="flex h-[100px] border-b-2 border-[#56a457] bg-[#61b661] shadow-[0_2px_4px_rgba(34,36,38,0.15)]">
        <h1 className="flex flex-1 items-center pb-[4px] pl-[31px] text-[38px] font-bold tracking-[0.2px] text-white [text-shadow:0_0_0.6px_#fff]">
          Submit to request a ride
        </h1>
        <div className="flex w-[298px] border-l-2 border-[#59aa5a] pt-[12px] pl-[32px]">
          <button className="flex h-[74px] w-[244px] items-center rounded-[6px] bg-[#2985d0] pb-[3px] pl-[42px] text-[29px] font-bold tracking-[0.2px] text-white [text-shadow:0_0_0.6px_#fff]">
            <span className="w-[137px] text-left">Request</span>
            <svg width="20" height="28" viewBox="0 0 20 28" fill="none" stroke="#d4e7f6" strokeWidth="5.500">
              <path d="M3.500,3L14.500,14 3.500,25" strokeLinejoin="round" />
            </svg>
          </button>
        </div>
      </header>

      <section className="mt-[12px] flex h-[554px] rounded-l-[6px] border-2 border-r-0 border-[#dededf] shadow-[0_2px_4px_rgba(34,36,38,0.15)]">
        <div className="w-[2626px] shrink-0">
          <h2 className="pt-px text-center text-[38px] leading-[44px] font-bold tracking-[0.2px]">What is requesting?</h2>
          <div className="mt-[24px] pl-[79px] font-['Liberation_Sans',sans-serif] text-[32px] leading-[44.100px] whitespace-nowrap">
            <p>
              Requesting is a process where Speedy Wheels will send an email to selected ride services to contact organizations about the availability of the
              <br />
              service. Organizations will work with the given information such as destination and time to determine if they will be able to provide the
              <br />
              requested service.
            </p>
            <p className="mt-[32px]">
              Select ride services by clicking “Add to List”. Ride services will be added to the list of organizations to contact. By clicking “Request”, Speedy
              <br />
              Wheels will contact the selected organizations on your behalf. Organizations will receive an email request and will follow up with a call or email
              <br />
              within two business days. Requesting a trip is a free service provided by Speedy Wheels. Payment of transportation will be determined by
              <br />
              each individual organization.
            </p>
          </div>
        </div>
        <div className="flex flex-1 items-center border-l-2 border-[#e8e9e9] pl-[30px]">
          <button className="flex h-[74px] w-[212px] shrink-0 items-center rounded-[6px] bg-[#2985d0] pb-[3px] pl-[43px] text-[29px] font-bold tracking-[0.2px] text-white [text-shadow:0_0_0.6px_#fff]">
            <span className="w-[89px] text-left">Close</span>
            <svg width="21" height="21" viewBox="0 0 21 21" stroke="#fff" strokeWidth="6.500" className="mt-[2px]">
              <path d="M3,3L18,18M18,3L3,18" />
            </svg>
          </button>
        </div>
      </section>

      <main className="mt-[128px] flex">
        <Sidebar />
        <div className="mt-[40px] ml-[40px] w-[2160px]">
          <div className="relative h-[640px] overflow-hidden">
            <MapCanvas />
            <div className="absolute top-[14px] left-[16px] w-[56px] overflow-hidden rounded-[8px] border-4 border-black/20 bg-white bg-clip-padding">
              <button className="flex h-[47px] w-full items-center justify-center border-b-2 border-[#ccc] pt-[10px]">
                <svg width="20" height="20" viewBox="0 0 20 20" stroke="#000" strokeWidth="3.500">
                  <path d="M10,0V20M0,10H20" />
                </svg>
              </button>
              <button className="flex h-[49px] w-full items-center justify-center pt-[9px]">
                <svg width="20" height="20" viewBox="0 0 20 20" stroke="#000" strokeWidth="3.500">
                  <path d="M0,10H20" />
                </svg>
              </button>
            </div>
            <div className="absolute right-0 bottom-0 h-[26px] bg-white/70 pr-[8px] pl-[9px] font-['Liberation_Sans',sans-serif] text-[18.300px] leading-[28px] whitespace-nowrap text-[#333]">
              <span className="text-[#0078a8]">Leaflet</span> | © <span className="text-[#0078a8]">OpenStreetMap</span> contributors
            </div>
          </div>
          <div className="mt-[22px] flex h-[102px] rounded-[6px] border-2 border-[#dededf] shadow-[0_2px_4px_rgba(34,36,38,0.15)]">
            <div className="w-[1290px]" />
            <div className="flex-1 border-l-2 border-[#e8e9e9] pt-[12px] pl-[32px]">
              <button className="flex h-[74px] w-[800px] items-center justify-center rounded-[6px] bg-[#2db84b] pr-[19px] pb-[4px] text-[29px] font-bold tracking-[0.2px] text-white [text-shadow:0_0_0.6px_#fff]">
                <svg width="27" height="26" viewBox="0 0 27 26" className="mt-[2px] mr-[16px]" fill="none" stroke="#d5f1db" strokeWidth="2.200">
                  <path d="M5.500,12V1.500H17L21.500,6V12" />
                  <path d="M16.500,1.500V6.500H21.500" />
                  <path d="M0,21.500V14.500Q0,11.500 3,11.500H24Q27,11.500 27,14.500V21.500H22V18H5V21.500Z" fill="#d5f1db" stroke="none" />
                  <path d="M5.500,18V24.800H21.500V18Z" fill="#2db84b" />
                </svg>
                Print Friendly
              </button>
            </div>
          </div>
        </div>
      </main>
    </div>
  );
}
